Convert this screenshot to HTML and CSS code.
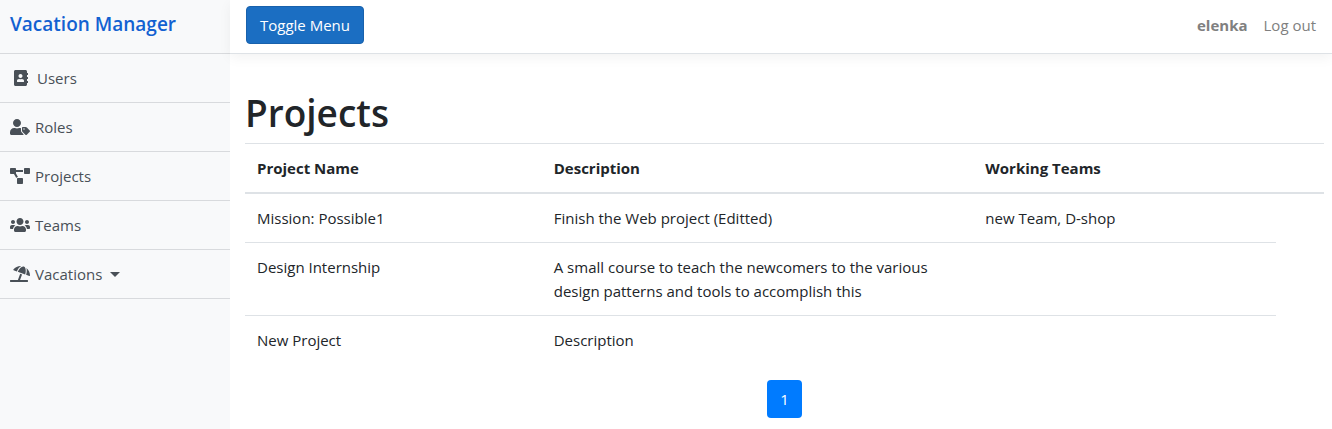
FILE: index.html
```html
<!DOCTYPE html>
<html lang="en">
<head>
<meta charset="utf-8">
<meta name="viewport" content="width=device-width, initial-scale=1">
<title>Projects - Vacation Manager</title>
<link rel="stylesheet" href="styles.css">
</head>
<body>
<div class="wrapper">
  <aside class="sidebar">
    <a class="brand" href="#">Vacation Manager</a>
    <nav class="menu">
      <a class="menu-item" href="#"><svg class="icon icon-book" viewBox="0 0 448 512" aria-hidden="true"><path d="M436 160c6.600 0 12-5.400 12-12v-40c0-6.600-5.400-12-12-12h-20V48c0-26.500-21.500-48-48-48H48C21.500 0 0 21.500 0 48v416c0 26.500 21.500 48 48 48h320c26.500 0 48-21.500 48-48v-48h20c6.600 0 12-5.400 12-12v-40c0-6.600-5.400-12-12-12h-20v-64h20c6.600 0 12-5.400 12-12v-40c0-6.600-5.400-12-12-12h-20v-64h20zm-228-32c35.300 0 64 28.700 64 64s-28.700 64-64 64-64-28.700-64-64 28.700-64 64-64zm112 236.800c0 10.600-10 19.200-22.400 19.200H118.400C106 384 96 375.400 96 364.800v-19.200c0-31.800 30.100-57.600 67.200-57.600h5c12.300 5.100 25.700 8 39.800 8s27.600-2.900 39.800-8h5c37.100 0 67.200 25.800 67.200 57.600v19.200z"/></svg>Users</a>
      <a class="menu-item" href="#"><svg class="icon" viewBox="0 0 640 512" aria-hidden="true"><path d="M630.600 364.900l-90.300-90.200c-12-12-28.300-18.700-45.300-18.700h-79.300c-17.700 0-32 14.300-32 32v79.200c0 17 6.700 33.200 18.700 45.200l90.300 90.200c12.500 12.500 32.800 12.500 45.300 0l92.500-92.500c12.600-12.500 12.600-32.700.1-45.200zm-182.800-21c-13.300 0-24-10.700-24-24s10.700-24 24-24 24 10.700 24 24c0 13.200-10.700 24-24 24zm-223.800-88c70.700 0 128-57.300 128-128C352 57.300 294.700 0 224 0S96 57.300 96 128c0 70.600 57.300 127.900 128 127.900zm127.800 111.200V294c-12.200-3.600-24.900-6.200-38.200-6.200h-16.700c-22.200 10.200-46.900 16-72.900 16s-50.600-5.800-72.900-16h-16.700C60.200 287.900 0 348.100 0 422.300v41.600c0 26.500 21.500 48 48 48h352c15.500 0 29.100-7.500 37.900-18.900l-58-58c-18.100-18.100-28.100-42.200-28.100-67.900z"/></svg>Roles</a>
      <a class="menu-item" href="#"><svg class="icon" viewBox="0 0 640 512" aria-hidden="true"><path d="M384 320H256c-17.670 0-32 14.330-32 32v128c0 17.670 14.330 32 32 32h128c17.670 0 32-14.330 32-32V352c0-17.670-14.330-32-32-32zM192 32c0-17.670-14.330-32-32-32H32C14.330 0 0 14.330 0 32v128c0 17.670 14.330 32 32 32h95.720l73.160 128.040C211.980 300.980 232.400 288 256 288h.28L192 175.510V128h224V64H192V32zM608 0H480c-17.670 0-32 14.330-32 32v128c0 17.670 14.330 32 32 32h128c17.670 0 32-14.330 32-32V32c0-17.670-14.330-32-32-32z"/></svg>Projects</a>
      <a class="menu-item" href="#"><svg class="icon" viewBox="0 0 640 512" aria-hidden="true"><path d="M96 224c35.300 0 64-28.700 64-64s-28.700-64-64-64-64 28.700-64 64 28.700 64 64 64zm448 0c35.300 0 64-28.700 64-64s-28.700-64-64-64-64 28.700-64 64 28.700 64 64 64zm32 32h-64c-17.600 0-33.500 7.100-45.100 18.600 40.300 22.100 68.900 62 75.100 109.400h66c17.700 0 32-14.300 32-32v-32c0-35.300-28.700-64-64-64zm-256 0c61.900 0 112-50.100 112-112S381.900 32 320 32 208 82.100 208 144s50.100 112 112 112zm76.800 32h-8.300c-20.800 10-43.900 16-68.500 16s-47.600-6-68.500-16h-8.300C179.600 288 128 339.600 128 403.200V432c0 26.500 21.500 48 48 48h288c26.500 0 48-21.500 48-48v-28.800c0-63.600-51.600-115.200-115.200-115.200zm-223.700-13.400C161.500 263.100 145.600 256 128 256H64c-35.300 0-64 28.700-64 64v32c0 17.700 14.300 32 32 32h65.900c6.300-47.400 34.900-87.300 75.200-109.400z"/></svg>Teams</a>
      <a class="menu-item" href="#"><svg class="icon" viewBox="0 0 640 512" aria-hidden="true"><path d="M115.380 136.900l102.110 37.180c35.190-81.540 86.210-144.290 139-173.700-95.880-4.890-188.780 36.960-248.530 111.800-6.690 8.400-2.660 21.050 7.420 24.720zm132.250 48.160l238.480 86.830c35.760-121.380 18.700-231.660-42.630-253.980-7.400-2.700-15.130-4-23.090-4-58.020.01-128.270 69.170-172.760 171.150zM521.480 60.500c6.220 16.300 10.830 34.600 13.200 55.190 5.740 49.890-1.420 108.230-18.950 166.980l102.620 37.360c10.090 3.670 21.310-3.430 21.570-14.170 2.320-95.690-41.910-187.440-118.440-245.360zM560 447.980H321.060L386 269.500l-60.140-21.900-72.900 200.370H16c-8.840 0-16 7.160-16 16.010v32.010C0 504.830 7.160 512 16 512h544c8.840 0 16-7.160 16-16.010v-32.010c0-8.840-7.160-16-16-16z"/></svg>Vacations<span class="caret"></span></a>
    </nav>
  </aside>
  <div class="page">
    <header class="topbar">
      <button class="toggle" type="button">Toggle Menu</button>
      <nav class="account">
        <a class="account-link account-name" href="#">elenka</a>
        <a class="account-link" href="#">Log out</a>
      </nav>
    </header>
    <main class="content">
      <h1 class="title">Projects</h1>
      <table class="table">
        <colgroup><col class="col-name"><col class="col-description"><col class="col-teams"><col class="col-actions"></colgroup>
        <thead>
          <tr><th scope="col">Project Name</th><th scope="col">Description</th><th scope="col">Working Teams</th><th></th></tr>
        </thead>
        <tbody>
          <tr><td>Mission: Possible1</td><td>Finish the Web project (Editted)</td><td>new Team, D-shop</td></tr>
          <tr><td>Design Internship</td><td>A small course to teach the newcomers to the various design patterns and tools to accomplish this</td><td></td></tr>
          <tr><td>New Project</td><td>Description</td><td></td></tr>
        </tbody>
      </table>
      <nav class="pagination" aria-label="Pages"><a class="page-link" href="#">1</a></nav>
    </main>
  </div>
</div>
</body>
</html>
```
FILE: styles.css
```css
*, *::before, *::after {
  box-sizing: border-box;
}

body {
  margin: 0;
  background: #fff;
  color: #212529;
  font-family: "Segoe UI", "Open Sans", sans-serif;
  font-size: 15px;
  line-height: 24px;
}

a {
  text-decoration: none;
}

.wrapper {
  display: flex;
  min-height: 100vh;
}

.sidebar {
  flex: 0 0 230px;
  background: #f8f9fa;
}

.brand {
  display: block;
  padding: 12px 10px 17px;
  border-bottom: 1px solid #d8dadd;
  color: #1261d1;
  font-size: 19px;
  font-weight: 600;
}

.menu-item {
  display: flex;
  align-items: center;
  padding: 12px 10px;
  border-bottom: 1px solid #d8dadd;
  color: #495057;
}

.icon {
  width: 20px;
  height: 16px;
  margin-right: 5px;
  fill: currentColor;
}

.icon-book {
  width: 14px;
  margin: 0 9px 0 4px;
}

.caret {
  margin-left: 8px;
  border: 5px solid transparent;
  border-top-color: currentColor;
  border-bottom: 0;
}

.page {
  flex: 1;
  min-width: 0;
}

.topbar {
  display: flex;
  align-items: center;
  justify-content: space-between;
  padding: 6px 16px 9px;
  border-bottom: 1px solid #dee2e6;
  box-shadow: 0 4px 12px rgba(0, 0, 0, 0.05);
}

.toggle {
  padding: 6px 13px;
  border: 1px solid #1861ac;
  border-radius: 4px;
  background: #1b6ec2;
  color: #fff;
  font: inherit;
}

.account {
  display: flex;
  gap: 16px;
}

.account-link {
  color: #808080;
}

.account-name {
  font-weight: 700;
}

.content {
  padding: 35px 8px 11px 15px;
}

.title {
  margin: 0 0 6px;
  font-size: 37px;
  font-weight: 600;
  line-height: 48px;
}

.table {
  width: 100%;
  margin-bottom: 16px;
  border-collapse: collapse;
  table-layout: fixed;
}

.col-name {
  width: 27.5%;
}

.col-description {
  width: 40%;
}

.col-actions {
  width: 48px;
}

.table th,
.table td {
  padding: 12px;
  border-top: 1px solid #dee2e6;
  text-align: left;
  vertical-align: top;
}

.table th {
  border-bottom: 2px solid #dee2e6;
}

.pagination {
  display: flex;
  justify-content: center;
}

.page-link {
  padding: 7px 13px;
  border-radius: 4px;
  background: #007bff;
  color: #fff;
}
```
